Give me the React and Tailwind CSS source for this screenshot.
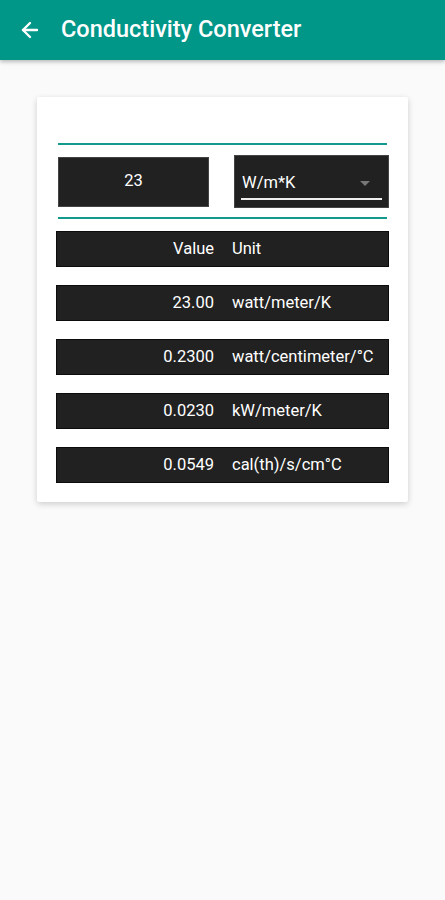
import { ArrowLeft } from "lucide-react";

const rows = [
  { value: "23.00", unit: "watt/meter/K" },
  { value: "0.2300", unit: "watt/centimeter/°C" },
  { value: "0.0230", unit: "kW/meter/K" },
  { value: "0.0549", unit: "cal(th)/s/cm°C" },
];

function Row({ value, unit }) {
  return (
    <div className="flex h-[36px] items-center bg-[#212121] border border-[#0c0c0c] text-white text-[16.5px]">
      <div className="w-[157px] text-right">{value}</div>
      <div className="pl-[18px] whitespace-nowrap">{unit}</div>
    </div>
  );
}

export default function App() {
  return (
    <div
      className="min-h-[900px] bg-[#fafafa]"
      style={{ fontFamily: "Roboto, 'Liberation Sans', sans-serif" }}
    >
      {/* app bar */}
      <div className="h-[60px] bg-[#009688] flex items-center shadow-[0_2px_4px_rgba(0,0,0,0.25)] relative">
        <ArrowLeft className="ml-[18px] w-6 h-6 text-white" strokeWidth={2.4} />
        <h1 className="ml-[19px] text-white text-[23.5px] font-medium">
          Conductivity Converter
        </h1>
      </div>

      <div className="px-[37px] pt-[37px]">
        <div className="bg-white rounded-[2px] shadow-[0_2px_6px_rgba(0,0,0,0.18)] pt-[46px] pb-[19px] pl-[19px] pr-[19px]">
          <div className="ml-[2px] mr-[2px] h-[2px] bg-[#139a8d]" />

          <div className="flex items-center mt-[10px] ml-[2px]">
            <div className="w-[151px] h-[50px] bg-[#212121] border border-[#444] flex items-center justify-center text-white text-[16.5px]">
              23
            </div>
            <div className="ml-[25px] w-[155px] h-[53px] bg-[#212121] border border-[#444] relative">
              <div className="absolute left-[7px] top-[15px] text-white text-[16.5px]">
                W/m*K
              </div>
              <div className="absolute right-[18px] top-[25px] w-0 h-0 border-l-[5px] border-r-[5px] border-t-[5px] border-l-transparent border-r-transparent border-t-[#777]" />
              <div className="absolute left-[6px] right-[6px] top-[42px] h-[2px] bg-[#eee]" />
            </div>
          </div>

          <div className="ml-[2px] mr-[2px] mt-[9px] h-[2px] bg-[#139a8d]" />

          <div className="mt-[12px] flex flex-col gap-[18px]">
            <Row value="Value" unit="Unit" />
            {rows.map((r) => (
              <Row key={r.unit} value={r.value} unit={r.unit} />
            ))}
          </div>
        </div>
      </div>
    </div>
  );
}
